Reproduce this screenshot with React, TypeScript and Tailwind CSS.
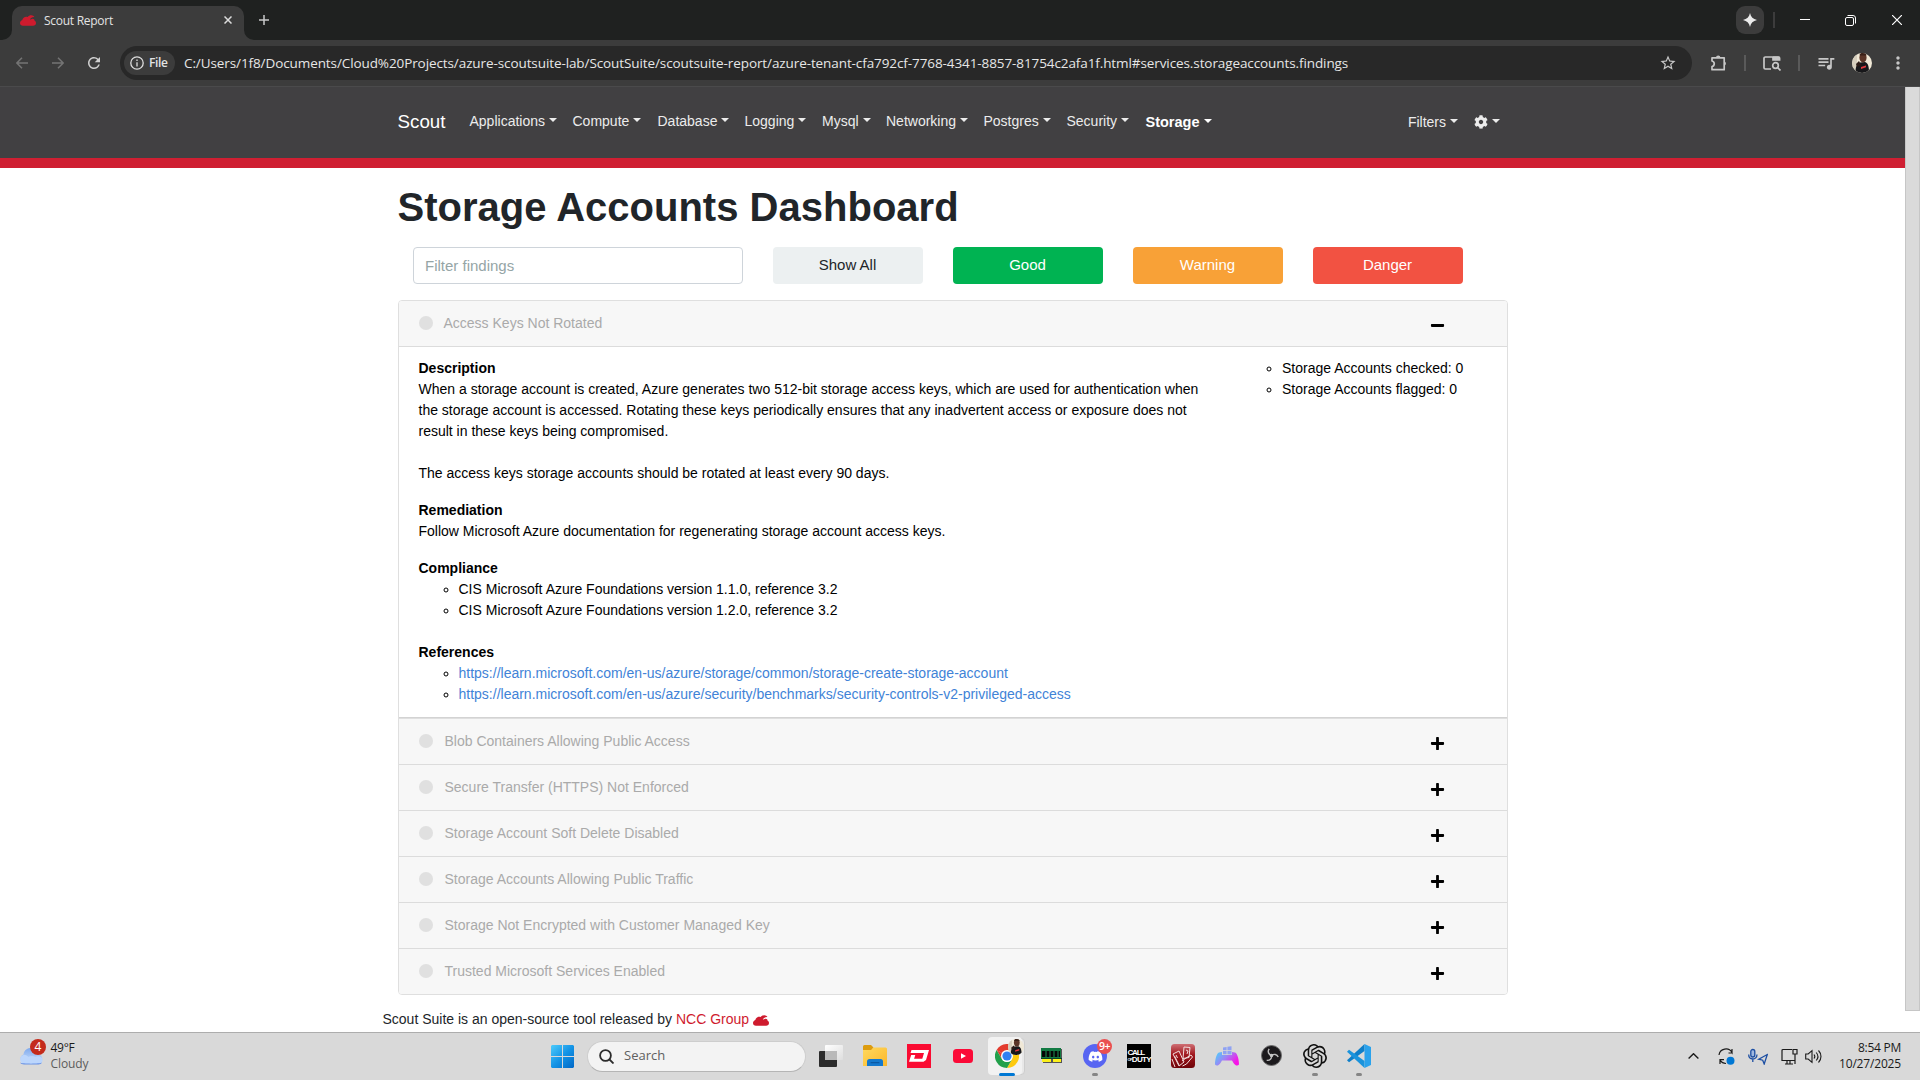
import React from "react";
import { FaCog, FaDiscord, FaMinus, FaPlus } from "react-icons/fa";
import { MdMoreVert, MdQueueMusic, MdRefresh, MdStarOutline } from "react-icons/md";
import { SiOpenai } from "react-icons/si";

function CloudMark({ className }: { className: string }) {
  return (
    <svg viewBox="0 0 32 22" className={className} fill="#cf1b2e">
      <path d="M6 21.500C2.500 21.500 0 19.400 0 16c0-3 2-5.200 4.600-6.200C5.400 6 8.700 3.400 12.600 3.400c1 0 2 .2 2.800.5C17 1.500 19.800.3 22.800.5c2.600.1 4.800 1.400 6 3.400-2.300-.2-4.800.6-6.600 2.200l-2.100 2c-.5.400-.1 1 .5.800l2.900-1.100c1.800-.6 3.700-.2 4.600.7.700.7.9 1.500.8 2.500 1.900.8 3.100 2.600 3.100 4.900 0 3.400-2.500 5.600-5.900 5.600H6z" />
    </svg>
  );
}

function Avatar({ className }: { className: string }) {
  return (
    <svg viewBox="0 0 20 20" className={className}>
      <clipPath id="avatar-clip"><circle cx="10" cy="10" r="10" /></clipPath>
      <g clipPath="url(#avatar-clip)">
        <rect width="20" height="20" fill="#f0e8d6" />
        <rect width="5" height="20" fill="#d6cebd" />
        <path d="M3.500 20c0-5 .5-9 4.500-10.500l5-.5c3 1 4 4 4 11z" fill="#17171a" />
        <path d="M4 11l3-3 2 4-4 2z" fill="#2a1a16" />
        <ellipse cx="11" cy="4.500" rx="3.600" ry="5" fill="#5b3527" />
        <path d="M7.500 2c1-3 6-3 7 0l-1 .6h-5z" fill="#3a2118" />
        <path d="M9 14l5-1.500v1.800L9 16z" fill="#e0393e" />
      </g>
    </svg>
  );
}

function TopBar() {
  return (
    <div className="flex h-[40px] items-start bg-[#1f2120]">
      <div className="relative ml-[12px] mt-[6px] flex h-[34px] w-[232px] items-center rounded-t-[10px] bg-[#3c3c3c]">
        <svg viewBox="0 0 10 10" className="absolute -left-[10px] bottom-0 h-[10px] w-[10px]" fill="#3c3c3c"><path d="M10 0v10H0A10 10 0 0 0 10 0z" /></svg>
        <svg viewBox="0 0 10 10" className="absolute -right-[10px] bottom-0 h-[10px] w-[10px]" fill="#3c3c3c"><path d="M0 0v10h10A10 10 0 0 1 0 0z" /></svg>
        <CloudMark className="-mt-[6px] ml-[8px] h-[11px] w-[16px]" />
        <span className="-mt-[5px] ml-[8px] text-[12px] tracking-[-0.27px] text-[#e3e3e3]">Scout Report</span>
        <svg viewBox="0 0 8 8" className="-mt-[6px] ml-auto mr-[12px] h-[8px] w-[8px]" stroke="#dcdcdc" strokeWidth="1.500"><path d="M.5.5l7 7M7.500.5l-7 7" /></svg>
      </div>
      <svg viewBox="0 0 10 10" className="ml-[15px] mt-[15px] h-[10px] w-[10px]" stroke="#c9c9c9" strokeWidth="1.500"><path d="M0 5h10M5 0v10" /></svg>
      <div className="ml-auto flex items-center pt-[6px]">
        <div className="flex h-[28px] w-[28px] items-center justify-center rounded-[9px] bg-[#3c3c3c]">
          <svg viewBox="0 0 14 14" className="h-[14px] w-[14px]" fill="#ececec"><path d="M7 0c.9 4 3 6.100 7 7-4 .9-6.100 3-7 7-.9-4-3-6.100-7-7C4 6.100 6.100 4 7 0z" /></svg>
        </div>
        <div className="ml-[9px] h-[16px] w-[2px] bg-[#3c3c3c]" />
        <div className="ml-[25px] -mt-px h-px w-[10px] bg-white" />
        <svg viewBox="0 0 11 11" className="ml-[35px] h-[11px] w-[11px]" fill="none" stroke="#fff"><rect x=".5" y="2.500" width="8" height="8" rx="1.500" /><path d="M2.500.5h5.500a2.500 2.500 0 0 1 2.500 2.500v5.500" /></svg>
        <svg viewBox="0 0 10 10" className="ml-[36px] mr-[18px] h-[10px] w-[10px]" stroke="#fff" strokeWidth="1.200"><path d="M0 0l10 10M10 0L0 10" /></svg>
      </div>
    </div>
  );
}

function AddressBar() {
  return (
    <div className="flex h-[47px] items-start border-b border-[#4a4a4b] bg-[#3c3c3c] pt-[6px]">
      <div className="flex h-[34px] items-center">
        <svg viewBox="0 0 12 12" className="ml-[16px] h-[12px] w-[12px]" fill="none" stroke="#747474" strokeWidth="1.500"><path d="M12 6H1M6 .8L.9 6 6 11.200" /></svg>
        <svg viewBox="0 0 12 12" className="ml-[24px] h-[12px] w-[12px]" fill="none" stroke="#747474" strokeWidth="1.500"><path d="M0 6h11M6 .8L11.100 6 6 11.200" /></svg>
        <MdRefresh className="ml-[21px] h-[18px] w-[18px] text-[#cfcfcf]" />
      </div>
      <div className="ml-[17px] flex h-[34px] w-[1572px] items-center rounded-full bg-[#282828]">
        <div className="ml-[4px] flex h-[24px] w-[51px] items-center rounded-full bg-[#3c3c3c]">
          <svg viewBox="0 0 14 14" className="ml-[6px] h-[14px] w-[14px]" fill="none" stroke="#dedede" strokeWidth="1.300"><circle cx="7" cy="7" r="6.200" /><path d="M7 6.200v4.200M7 3.500v1.400" /></svg>
          <span className="ml-[5px] text-[12px] font-semibold tracking-[-0.35px] text-[#e3e3e3]">File</span>
        </div>
        <span className="ml-[9px] whitespace-nowrap text-[13.5px] tracking-[-0.094px] text-[#e6e6e6]">
          C:/Users/1f8/Documents/Cloud%20Projects/azure-scoutsuite-lab/ScoutSuite/scoutsuite-report/azure-tenant-cfa792cf-7768-4341-8857-81754c2afa1f.html#services.storageaccounts.findings
        </span>
        <MdStarOutline className="ml-auto mr-[15px] h-[18px] w-[18px] text-[#c7c7c7]" />
      </div>
      <div className="flex h-[34px] items-center text-[#c7c7c7]">
        <svg viewBox="0 0 16 16" className="ml-[19px] h-[16px] w-[16px]" fill="none" stroke="currentColor" strokeWidth="1.700"><path d="M1 2.800h12.200v11.900H1v-3.200c3-.6 3-4.900 0-5.500z" strokeLinejoin="round" /><path d="M5 2.500a2.200 2 0 0 1 4.400 0zM13.500 6.500a2 2.200 0 0 1 0 4.200z" fill="currentColor" stroke="none" /></svg>
        <div className="ml-[17px] h-[16px] w-[2px] bg-[#5a5a5a]" />
        <svg viewBox="0 0 18 16" className="ml-[17px] h-[16px] w-[18px]" fill="none" stroke="currentColor" strokeWidth="1.700"><path d="M8 14H2.300A1.300 1.300 0 0 1 1 12.700V3.300A1.300 1.300 0 0 1 2.300 2h13A1.300 1.300 0 0 1 16.600 3.300V5H10V2" /><path d="M10 1.500h6.500V5H10z" fill="currentColor" stroke="none" /><circle cx="12.500" cy="10.500" r="2.800" /><path d="M14.500 12.500l3 3" /></svg>
        <div className="ml-[17px] h-[16px] w-[2px] bg-[#5a5a5a]" />
        <MdQueueMusic className="ml-[16px] h-[20px] w-[20px]" />
        <Avatar className="ml-[16px] h-[20px] w-[20px]" />
        <MdMoreVert className="ml-[16px] h-[20px] w-[20px]" />
      </div>
    </div>
  );
}

function Caret() {
  return <span className="ml-[4px] mb-[3px] inline-block h-0 w-0 border-x-[4px] border-t-[4px] border-x-transparent border-t-current" />;
}

const navItems = [
  { label: "Applications", width: "w-[103px]" },
  { label: "Compute", width: "w-[85px]" },
  { label: "Database", width: "w-[87px]" },
  { label: "Logging", width: "w-[77.5px]" },
  { label: "Mysql", width: "w-[64px]" },
  { label: "Networking", width: "w-[97.5px]" },
  { label: "Postgres", width: "w-[83px]" },
  { label: "Security", width: "w-[79px]" },
];

function NavBar() {
  return (
    <nav className="flex h-[81px] items-center border-b-[10px] border-[#cf1f32] bg-[#414042] pl-[397.5px] font-['Liberation_Sans',sans-serif] text-[14px] leading-[21px] text-[#ececec]">
      <span className="w-[72px] pb-[2px] text-[18.75px] text-white">Scout</span>
      {navItems.map((n) => (
        <span key={n.label} className={`flex items-center pb-[3px] ${n.width}`}>{n.label}<Caret /></span>
      ))}
      <span className="flex items-center pb-[1px] text-[14.5px] font-bold text-white">Storage<Caret /></span>
      <span className="ml-auto flex items-center pb-[1px]">Filters<Caret /></span>
      <span className="ml-[16px] mr-[405px] flex items-center pb-[1px]"><FaCog className="h-[14px] w-[14px]" /><Caret /></span>
    </nav>
  );
}

function Bullets({ children }: { children: React.ReactNode }) {
  return <ul className="list-[circle] pl-[40px]">{children}</ul>;
}

function Finding({ title, open, first }: { title: string; open?: boolean; first?: boolean }) {
  return (
    <div className={`flex h-[46px] items-center border-b border-[#dcdcdc] bg-[#f7f7f7] pl-[19.5px] text-[#aaaaaa] ${first ? "rounded-t-[3px]" : ""}`}>
      <span className="-mt-[1px] h-[14px] w-[14px] rounded-full bg-[#e0e0e0]" />
      <span className={open ? "ml-[11px] -mt-[1px]" : "ml-[12px] -mt-[1px]"}>{title}</span>
      {open ? (
        <FaMinus className="ml-auto mr-[62px] mt-[4px] h-[15px] w-[15px] text-black" />
      ) : (
        <FaPlus className="ml-auto mr-[62px] mt-[3px] h-[15px] w-[15px] text-black" />
      )}
    </div>
  );
}

const collapsed = [
  "Blob Containers Allowing Public Access",
  "Secure Transfer (HTTPS) Not Enforced",
  "Storage Account Soft Delete Disabled",
  "Storage Accounts Allowing Public Traffic",
  "Storage Not Encrypted with Customer Managed Key",
  "Trusted Microsoft Services Enabled",
];

const filterButton = "h-[37px] w-[150px] rounded-[4px] pb-[3px] pr-[1px] text-[15px]";

function Dashboard() {
  return (
    <main className="flex-1 overflow-hidden bg-white font-['Liberation_Sans',sans-serif] text-[14px] leading-[21px] text-black">
      <h1 className="ml-[397.5px] mt-[15px] h-[48px] text-[40px] font-bold leading-[48px] tracking-[0.01px] text-[#212529]">Storage Accounts Dashboard</h1>
      <div className="ml-[413px] mt-[16px] flex h-[37px] gap-[30px] text-[15px]">
        <div className="flex w-[330px] items-center rounded-[4px] border border-[#ced4da] pl-[11px] text-[#95a5a6]">Filter findings</div>
        <button className={`${filterButton} bg-[#ecf0f1] text-[#212529]`}>Show All</button>
        <button className={`${filterButton} bg-[#00b352] text-white`}>Good</button>
        <button className={`${filterButton} bg-[#f8a137] text-white`}>Warning</button>
        <button className={`${filterButton} bg-[#f25242] text-white`}>Danger</button>
      </div>
      <div className="ml-[398px] mt-[16px] w-[1110px] rounded-[4px] border border-[#dfdfdf]">
        <Finding title="Access Keys Not Rotated" open first />
        <div className="flex h-[371px] justify-between border-b border-[#d3d3d3] pl-[19.5px] pt-[11px]">
          <div className="w-[800px]">
            <p className="font-bold">Description</p>
            <p className="whitespace-nowrap">
              When a storage account is created, Azure generates two 512-bit storage access keys, which are used for authentication when<br />
              the storage account is accessed. Rotating these keys periodically ensures that any inadvertent access or exposure does not<br />
              result in these keys being compromised.
            </p>
            <p className="mt-[21px]">The access keys storage accounts should be rotated at least every 90 days.</p>
            <p className="mt-[16px] font-bold">Remediation</p>
            <p>Follow Microsoft Azure documentation for regenerating storage account access keys.</p>
            <p className="mt-[16px] font-bold">Compliance</p>
            <Bullets>
              <li>CIS Microsoft Azure Foundations version 1.1.0, reference 3.2</li>
              <li>CIS Microsoft Azure Foundations version 1.2.0, reference 3.2</li>
            </Bullets>
            <p className="mt-[21px] font-bold">References</p>
            <Bullets>
              <li><span className="text-[#4183d7]">https://learn.microsoft.com/en-us/azure/storage/common/storage-create-storage-account</span></li>
              <li><span className="text-[#4183d7]">https://learn.microsoft.com/en-us/azure/security/benchmarks/security-controls-v2-privileged-access</span></li>
            </Bullets>
          </div>
          <div className="w-[265px]">
            <Bullets>
              <li>Storage Accounts checked: 0</li>
              <li>Storage Accounts flagged: 0</li>
            </Bullets>
          </div>
        </div>
        <div className="border-t border-[#dfdfdf] [&>*:last-child]:h-[45px] [&>*:last-child]:rounded-b-[3px] [&>*:last-child]:border-b-0">
          {collapsed.map((t) => <Finding key={t} title={t} />)}
        </div>
      </div>
      <div className="ml-[382.5px] mt-[14px] flex items-center text-[#212529]">
        <span>Scout Suite is an open-source tool released by <span className="text-[#cf1b2e]">NCC Group</span></span>
        <CloudMark className="ml-[4px] mt-[2px] h-[11px] w-[16px]" />
      </div>
    </main>
  );
}

function AppSlot({ children, running }: { children: React.ReactNode; running?: boolean }) {
  return (
    <div className="relative flex h-full w-[44px] items-center justify-center">
      {children}
      {running && <span className="absolute bottom-[4px] h-[3px] w-[6px] rounded-full bg-[#858585]" />}
    </div>
  );
}

function Taskbar() {
  return (
    <footer className="flex h-[48px] items-center border-t border-[#adadad] bg-[#d9d9d9] pb-[1px]">
      <div className="flex w-[551px] items-center">
        <div className="relative ml-[19px] h-[24px] w-[24px]">
          <svg viewBox="0 0 24 24" className="-mt-[2px] h-[24px] w-[24px]">
            <defs><linearGradient id="weather" x1="0" y1="0" x2="0" y2="1"><stop offset="0" stopColor="#7fa9ec" /><stop offset="1" stopColor="#cfe4ff" /></linearGradient></defs>
            <path d="M5 22a5 5 0 0 1-.5-9.500C5 7.500 9 6 12 6s6 3 6.500 6.500H19A4.800 4.800 0 0 1 19.500 22z" fill="url(#weather)" />
            <path d="M5 22a4.800 4.800 0 0 1 0-9.300c2 0 3.500 1 4.500 2.300 2-1.500 5-1.500 7 0 2.500-1.500 7-.5 7 3 0 2.400-1.500 4-4 4z" fill="#bcd6fc" />
            <path d="M1 20.500c2 1.500 20 1.500 22 0-1 1.700-2 1.900-3.500 1.900H5c-1.500 0-3-.5-4-1.900z" fill="#6a93e6" />
          </svg>
          <span className="absolute -top-[5px] left-[11px] flex h-[16px] w-[16px] items-center justify-center rounded-full bg-[#c42b1c] text-[12px] leading-none text-white">4</span>
        </div>
        <div className="ml-[7.5px] text-[12px] leading-[16px] text-[#1b1b1b]">
          <p className="tracking-[-0.25px]">49°F</p>
          <p className="tracking-[-0.09px] text-[#5c5c5c]">Cloudy</p>
        </div>
      </div>
      <svg viewBox="0 0 23 23" className="h-[23px] w-[23px]">
        <defs><linearGradient id="win" x1="0" y1="0" x2="1" y2="1"><stop offset="0" stopColor="#4dcbfb" /><stop offset=".5" stopColor="#1494e6" /><stop offset="1" stopColor="#0067c6" /></linearGradient></defs>
        <path d="M1 0h10v11H0V1zM12 0h10l1 1v10H12zM0 12h11v11H1l-1-1zM12 12h11v10l-1 1H12z" fill="url(#win)" />
      </svg>
      <div className="ml-[13px] flex h-[31px] w-[219px] items-center rounded-full border border-[#cdcdcd] border-b-[#b5b5b5] bg-[#f3f3f3]">
        <svg viewBox="0 0 15 15" className="ml-[11px] h-[15px] w-[15px]" fill="none" stroke="#2b2b2b" strokeWidth="1.800"><circle cx="6.500" cy="6.500" r="5.400" /><path d="M10.500 10.500l4 4" /></svg>
        <span className="ml-[10px] text-[13px] text-[#606060]">Search</span>
      </div>
      <div className="ml-[3px] flex h-[47px]">
        <AppSlot>
          <svg viewBox="0 0 24 24" className="h-[24px] w-[24px]">
            <defs><linearGradient id="tvw" x1="0" y1="0" x2="1" y2="1"><stop offset="0" stopColor="#fff" /><stop offset="1" stopColor="#dedede" /></linearGradient></defs>
            <rect x="0" y="7" width="18" height="16" rx="1" fill="#2b2b2b" /><rect x="6" y="1" width="18" height="15" rx="1" fill="url(#tvw)" /><rect x="6" y="7" width="12" height="9" fill="#b9b9b9" />
          </svg>
        </AppSlot>
        <AppSlot>
          <svg viewBox="0 0 24 24" className="h-[24px] w-[24px]">
            <defs><linearGradient id="fold" x1="0" y1="0" x2="1" y2="1"><stop offset="0" stopColor="#ffd95e" /><stop offset="1" stopColor="#fbb72c" /></linearGradient></defs>
            <path d="M0 2.500A1.500 1.500 0 0 1 1.500 1H8l2.500 2.500L8 7H0z" fill="#dd9c0e" /><path d="M0 6h8l2.500-2.500h12A1.500 1.500 0 0 1 24 5v17H0z" fill="url(#fold)" /><path d="M4 22v-4.500A2.500 2.500 0 0 1 6.500 15h11a2.500 2.500 0 0 1 2.500 2.500V22z" fill="#1479ce" /><rect x="7.500" y="18" width="9" height="1.300" rx=".6" fill="#0a59a4" />
          </svg>
        </AppSlot>
        <AppSlot>
          <svg viewBox="0 0 24 24" className="h-[24px] w-[24px]">
            <rect width="24" height="24" fill="#fa0b32" /><path d="M4.500 6H22l-3 10-2.500 1.700H2L4.200 11H8.300l-1.200 3.700h8.200L17 9H3.500z" fill="#fff" />
          </svg>
        </AppSlot>
        <AppSlot>
          <svg viewBox="0 0 20 14" className="h-[14px] w-[20px]"><rect width="20" height="14" rx="3.500" fill="#fb0a37" /><path d="M8 4.200v5.600l5-2.800z" fill="#fff" /></svg>
        </AppSlot>
        <AppSlot>
          <span className="absolute left-[6px] top-[5px] h-[37px] w-[34px] rounded-[4px] border border-[#cdcdcd] bg-[#e8e8e8]" />
          <span className="absolute left-[3px] top-[4px] h-[38px] w-[34px] rounded-[4px] bg-[#f2f2f2]" />
          <svg viewBox="0 0 48 48" className="relative h-[24px] w-[24px]">
            <path d="M24 24L3.200 12A24 24 0 0 1 44.800 12z" fill="#e33b2e" /><path d="M3.200 12L13.600 30 24 24z" fill="#e33b2e" /><path d="M44.800 12A24 24 0 0 1 24 48l10.400-18L24 12z" fill="#fdc90f" /><path d="M3.200 12l10.400 18a12 12 0 0 0 20.800 0L24 48A24 24 0 0 1 3.200 12z" fill="#22a04b" /><circle cx="24" cy="24" r="12" fill="#fff" /><circle cx="24" cy="24" r="9.200" fill="#2f80f2" />
          </svg>
          <Avatar className="absolute left-[23px] top-[6px] h-[16px] w-[16px]" />
          <span className="absolute bottom-[4px] h-[3px] w-[16px] rounded-full bg-[#0078d4]" />
        </AppSlot>
        <AppSlot>
          <svg viewBox="0 0 21 16" className="h-[16px] w-[21px]">
            <path d="M2 1h19v14H2z" fill="#555" /><path d="M0 0h20v10H0z" fill="#127a43" /><path d="M1 3h18v6H1z" fill="#050505" /><path d="M5 3v6M9 3v6M13 3v6M17 3v6" stroke="#1c9455" strokeWidth="1" /><path d="M1 11h9v3H1zM12 11h8v3h-8z" fill="#fbf01c" /><path d="M0 10h21v1H0z" fill="#0a4324" />
          </svg>
        </AppSlot>
        <AppSlot running>
          <span className="flex h-[24px] w-[24px] items-center justify-center rounded-full bg-[#5865f2]"><FaDiscord className="h-[15px] w-[15px] text-white" /></span>
          <span className="absolute left-[24px] top-[6px] flex h-[15px] w-[15px] items-center justify-center rounded-full bg-[#ea4f50] text-[10.5px] font-semibold leading-none tracking-[-0.6px] text-white">9+</span>
        </AppSlot>
        <AppSlot>
          <span className="flex h-[24px] w-[24px] flex-col items-center justify-center bg-black font-['Liberation_Sans',sans-serif] font-bold leading-[7px] text-white">
            <span className="w-[23px] text-[8px] tracking-[-1.2px]">CALL</span>
            <span className="flex w-[23px] text-[8px] tracking-[-0.7px]"><span className="text-[4px] tracking-[-0.6px]">OF</span>DUTY</span>
          </span>
        </AppSlot>
        <AppSlot>
          <svg viewBox="0 0 24 24" className="h-[24px] w-[24px]">
            <defs><linearGradient id="cards" x1="0" y1="0" x2="0" y2="1"><stop offset="0" stopColor="#cf6f74" /><stop offset=".45" stopColor="#a0161d" /><stop offset="1" stopColor="#6e0308" /></linearGradient></defs>
            <rect width="24" height="24" rx="3.500" fill="url(#cards)" />
            <g fill="none" stroke="#f2dcdc" strokeWidth="1"><path d="M2 10l6-3 5 11-5 4zM13 3l6 .5-1 10-6 1zM3.500 12l4.500 9M5 11l1.500 3M15 6l2 1-1 3M1 15l3 8M11 17l4-3 5-3 1.500 2-6 7-4 2" /></g>
          </svg>
        </AppSlot>
        <AppSlot>
          <svg viewBox="0 0 24 20" className="h-[20px] w-[24px]">
            <defs><linearGradient id="pad" x1="0" y1="0" x2="1" y2=".5"><stop offset=".1" stopColor="#55c7fa" /><stop offset=".5" stopColor="#9b86f5" /><stop offset="1" stopColor="#f714e6" /></linearGradient></defs>
            <path d="M4 6.500l3-.5v3h10V6l3 .5c2.500 1 4 7 4 12-1.500 2-4 1-5.500-1.500L17 14.500H7L5.500 17C4 19.500 1.500 20.500 0 18.500c0-5 1.500-11 4-12z" fill="url(#pad)" /><path d="M8 1.500L11.600 1v3.300H8zM12.400.8L16.500.2v4.100h-4.100zM8 5h3.600v3.200H8zM12.400 5h4.100v3.600l-4.100-.4z" fill="#8fa2f3" />
          </svg>
        </AppSlot>
        <AppSlot>
          <svg viewBox="0 0 22 22" className="mb-[1px] h-[21px] w-[21px]">
            <circle cx="11" cy="11" r="10.500" fill="#1c1a1d" stroke="#6d6d6d" /><g fill="none" stroke="#bdbdbd" strokeWidth="1.500"><path d="M11 11c-3-1-4.500-4-2.500-7" /><path d="M11 11c2.500-2 5.800-1.500 7 1.500" /><path d="M11 11c.5 3.200-1.700 5.500-5 5" /></g><circle cx="11" cy="11" r="1.800" fill="#c6c6c6" />
          </svg>
        </AppSlot>
        <AppSlot running><SiOpenai className="h-[24px] w-[24px] text-[#111]" /></AppSlot>
        <AppSlot running>
          <svg viewBox="0 0 24 24" className="h-[24px] w-[24px]">
            <path d="M17.500 0v7L2 18.300 0 16.300z" fill="#0f7fc9" /><path d="M17.500 24v-7L2 5.700 0 7.700z" fill="#1a93dc" /><path d="M17.500 0L24 3v18l-6.500 3z" fill="#2aa2ec" />
          </svg>
        </AppSlot>
      </div>
      <div className="ml-auto flex items-center text-[#1b1b1b]">
        <svg viewBox="0 0 11 6" className="h-[6px] w-[11px]" fill="none" stroke="currentColor" strokeWidth="1.400"><path d="M.6 5.400L5.500.7l4.900 4.700" /></svg>
        <svg viewBox="0 0 17 17" className="ml-[19px] h-[17px] w-[17px]" fill="none" stroke="currentColor" strokeWidth="1.200"><path d="M1 7a7 7 0 0 1 13-2.500V1M14.500 5h-4M8 15.500c-2.500 0-4.500-1-6-3.300M2 16v-4.300h4" /><circle cx="12.500" cy="12.800" r="4" fill="#0078d4" stroke="none" /></svg>
        <svg viewBox="0 0 20 17" className="ml-[13px] h-[17px] w-[20px]" fill="none" stroke="#1d4fa3" strokeWidth="1.300"><rect x="2.800" y="1.500" width="4" height="7.500" rx="2" fill="#9fb8e0" /><path d="M.7 6.500C.7 12.500 9 12.500 9 6.500M4.800 11v3" /><path d="M19.300 6.500l-8.600 4.700 4 1 1.500 3.800z" /></svg>
        <svg viewBox="0 0 17 17" className="ml-[13px] h-[17px] w-[17px]" fill="none" stroke="currentColor" strokeWidth="1.200"><path d="M11 1.500H2A1 1 0 0 0 1 2.500v10h12.500M6 12.500V16M9 12.500V16M4 16h8M12 1.500h4v4.500h-4zM14 6v10" /></svg>
        <svg viewBox="0 0 17 15" className="ml-[7px] h-[15px] w-[17px]" fill="none" stroke="currentColor" strokeWidth="1.100"><path d="M.7 5v5h2.500L7 13.300V1.700L3.200 5zM9 5.500c1 1.200 1 2.800 0 4M11.200 3.500c2.200 2.500 2.200 5.500 0 8M13.500 1.500c3.300 3.500 3.300 8.500 0 12" /></svg>
        <div className="ml-[17px] mr-[19px] text-right text-[12px] leading-[16px]">
          <p className="tracking-[-0.27px]">8:54 PM</p>
          <p className="tracking-[-0.17px]">10/27/2025</p>
        </div>
      </div>
    </footer>
  );
}

export default function App() {
  return (
    <div className="flex h-[1080px] w-[1920px] flex-col overflow-hidden font-['Open_Sans',sans-serif]">
      <TopBar />
      <AddressBar />
      <div className="flex h-[945px]">
        <div className="flex w-[1905px] flex-col">
          <NavBar />
          <Dashboard />
        </div>
        <div className="w-[15px] bg-white">
          <div className="h-[924px] border border-t-0 border-[#c6c6c6] bg-[#dadada]" />
        </div>
      </div>
      <Taskbar />
    </div>
  );
}
